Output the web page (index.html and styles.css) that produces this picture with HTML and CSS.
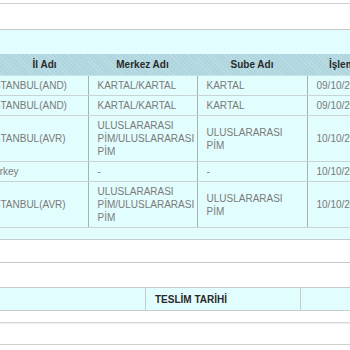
FILE: index.html
```html
<!DOCTYPE html>
<html>
<head>
<meta charset="utf-8">
<link rel="stylesheet" href="styles.css">
</head>
<body>
<div class="top-gap"></div>
<div class="top-panel"></div>
<div class="grid-area">
  <table class="grid">
    <thead>
      <tr>
        <th class="c1">İl Adı</th>
        <th class="c2">Merkez Adı</th>
        <th class="c3">Sube Adı</th>
        <th class="c4">İşlem Tarihi</th>
      </tr>
    </thead>
    <tbody>
      <tr><td>İSTANBUL(AND)</td><td>KARTAL/KARTAL</td><td>KARTAL</td><td>09/10/2013</td></tr>
      <tr><td>İSTANBUL(AND)</td><td>KARTAL/KARTAL</td><td>KARTAL</td><td>09/10/2013</td></tr>
      <tr><td>İSTANBUL(AVR)</td><td>ULUSLARARASI PİM/ULUSLARARASI PİM</td><td>ULUSLARARASI PİM</td><td>10/10/2013</td></tr>
      <tr><td class="shift">Türkey</td><td>-</td><td>-</td><td>10/10/2013</td></tr>
      <tr><td>İSTANBUL(AVR)</td><td>ULUSLARARASI PİM/ULUSLARARASI PİM</td><td>ULUSLARARASI PİM</td><td>10/10/2013</td></tr>
    </tbody>
  </table>
</div>
<div class="blank-band"></div>
<div class="spacer"></div>
<div class="teslim-row">
  <div class="t-cell t-a"></div>
  <div class="t-cell t-b">TESLİM TARİHİ</div>
  <div class="t-cell t-c"></div>
</div>
<div class="bottom-band"></div>
<div class="bottom-band2"></div>
</body>
</html>
```
FILE: styles.css
```css
html, body {
  margin: 0;
  padding: 0;
  background: #ffffff;
  width: 350px;
  height: 350px;
  overflow: hidden;
  font-family: "Liberation Sans", Arial, sans-serif;
}

.top-gap {
  height: 3px;
  background: #ffffff;
  border-bottom: 1px solid #cfcfcf;
  box-shadow: 0 1px 1px #ececec;
}

.top-panel {
  height: 25px;
  background: #ffffff;
  border-bottom: 1px solid #c8c8c8;
}

.grid-area {
  background: #e2fdfd;
  padding-top: 24px;
  padding-bottom: 11px;
  border-bottom: 1px solid #c6cccc;
}

.grid {
  border-collapse: collapse;
  margin-left: -15px;
  table-layout: fixed;
  width: 440px;
  font-size: 10px;
}

.grid th {
  height: 21px;
  padding: 0;
  font-weight: bold;
  color: #2a2a2a;
  text-align: center;
  background-color: #afd6de;
  background-image: repeating-linear-gradient(45deg, rgba(255,255,255,0.18) 0 1px, rgba(255,255,255,0) 1px 3px);
  border-bottom: 1px solid #c3e3e6;
}

.grid th.c1 { width: 87px; padding-left: 16px; }
.grid th.c2 { width: 109px; }
.grid th.c3 { width: 110px; }
.grid th.c4 { width: 99px; text-align: left; padding-left: 22px; }

.grid td {
  color: #7a7a7a;
  padding: 3px 8px 3px 9px;
  line-height: 13px;
  border-bottom: 1px solid #c9d3d3;
  border-left: 1px solid #a9b0b0;
  vertical-align: middle;
  text-align: left;
}

.grid td:first-child {
  border-left: none;
  padding-left: 6px;
}

.grid td.shift {
  padding-left: 3px;
}

.blank-band {
  height: 22px;
  border-bottom: 1px solid #c8c8c8;
}

.spacer {
  height: 24px;
}

.teslim-row {
  display: flex;
  height: 22px;
  background: #e2fdfd;
  border-top: 1px solid #c6cccc;
  border-bottom: 1px solid #c6cccc;
}

.t-cell {
  font-size: 10px;
  font-weight: bold;
  color: #2a2a2a;
  display: flex;
  align-items: center;
}

.t-a {
  width: 145px;
  border-right: 1px solid #c6cccc;
}

.t-b {
  width: 145px;
  padding-left: 9px;
  border-right: 1px solid #c6cccc;
}

.t-c {
  flex: 1;
}

.bottom-band {
  height: 11px;
  border-bottom: 1px solid #d6d6d6;
  box-shadow: 0 1px 1px #efefef;
}

.bottom-band2 {
  height: 21px;
  border-bottom: 1px solid #d0d0d0;
}
```
